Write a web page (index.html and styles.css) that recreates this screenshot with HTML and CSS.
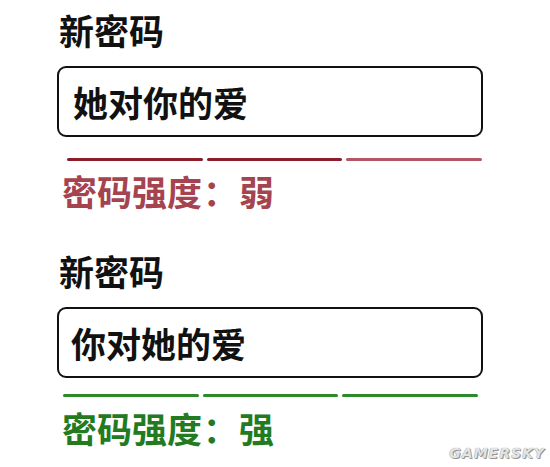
FILE: index.html
```html
<!DOCTYPE html>
<html lang="zh-CN">
<head>
  <meta charset="UTF-8">
  <meta name="viewport" content="width=device-width,initial-scale=1.0">
  <title>新密码</title>
  <link rel="stylesheet" href="styles.css">
</head>
<body>
  <div class="page">
    <!-- weak password -->
    <div class="field weak">
      <div class="label">新密码</div>
      <div class="input">她对你的爱</div>
      <div class="meter">
        <span class="bar"></span>
        <span class="bar"></span>
        <span class="bar dim"></span>
      </div>
      <div class="strength">密码强度<span class="colon">：</span>弱</div>
    </div>

    <!-- strong password -->
    <div class="field strong">
      <div class="label">新密码</div>
      <div class="input">你对她的爱</div>
      <div class="meter">
        <span class="bar"></span>
        <span class="bar"></span>
        <span class="bar"></span>
      </div>
      <div class="strength">密码强度<span class="colon">：</span>强</div>
    </div>
  </div>
  <div class="mark">GAMERSKY</div>
</body>
</html>
```

FILE: styles.css
```css
*{box-sizing:border-box}
html,body{margin:0;background:#fff}
body{font-family:"Noto Sans CJK SC","Noto Sans",sans-serif;color:#111;width:550px;height:467px;overflow:hidden;position:relative}
.page{padding:8px 67px 0 57px;display:flex;flex-direction:column;gap:36px}
.field{display:flex;flex-direction:column}
.label{font-size:35px;font-weight:700;line-height:44px;padding-left:2px}
.input{margin-top:14px;height:71px;border:2px solid #111;border-radius:9px;padding:0 14px;font-size:35px;font-weight:700;line-height:67px}
.meter{display:flex;gap:4px;margin:21px 1px 0 10px}
.bar{flex:1;height:3px;border-radius:2px}
.strength{font-size:35px;font-weight:700;line-height:44px;margin-top:8px;padding-left:5px}
.colon{font-family:"Noto Sans CJK TC",sans-serif;padding:0 1px}
.weak .bar{background:#8d1d2b}
.weak .bar.dim{background:#b05866}
.weak .strength{color:#a5434f}
.strong .input{padding-left:12px}
.strong .meter{margin:16px 5px 0 6px}
.strong .bar{background:#2d8a2b}
.strong .strength{color:#237a1f;margin-top:9px}
.mark{position:absolute;right:5px;bottom:6px;font-family:"DejaVu Sans",sans-serif;font-size:14px;font-weight:700;font-style:italic;color:#e4e4e4;letter-spacing:1px;text-shadow:0 0 1px #777,1px 1px 0 #999}
```
